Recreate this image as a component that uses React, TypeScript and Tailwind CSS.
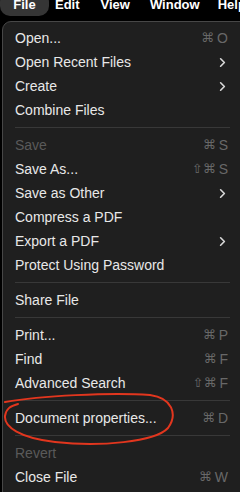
import { ChevronRight } from 'lucide-react';

type Item =
  | { kind: 'sep' }
  | { kind: 'item'; label: string; shortcut?: string; sub?: boolean; disabled?: boolean };

const items: Item[] = [
  { kind: 'item', label: 'Open...', shortcut: '⌘O' },
  { kind: 'item', label: 'Open Recent Files', sub: true },
  { kind: 'item', label: 'Create', sub: true },
  { kind: 'item', label: 'Combine Files' },
  { kind: 'sep' },
  { kind: 'item', label: 'Save', shortcut: '⌘S', disabled: true },
  { kind: 'item', label: 'Save As...', shortcut: '⇧⌘S' },
  { kind: 'item', label: 'Save as Other', sub: true },
  { kind: 'item', label: 'Compress a PDF' },
  { kind: 'item', label: 'Export a PDF', sub: true },
  { kind: 'item', label: 'Protect Using Password' },
  { kind: 'sep' },
  { kind: 'item', label: 'Share File' },
  { kind: 'sep' },
  { kind: 'item', label: 'Print...', shortcut: '⌘P' },
  { kind: 'item', label: 'Find', shortcut: '⌘F' },
  { kind: 'item', label: 'Advanced Search', shortcut: '⇧⌘F' },
  { kind: 'sep' },
  { kind: 'item', label: 'Document properties...', shortcut: '⌘D' },
  { kind: 'sep' },
  { kind: 'item', label: 'Revert', disabled: true },
  { kind: 'item', label: 'Close File', shortcut: '⌘W' },
];

function Shortcut({ keys }: { keys: string }) {
  const chars = keys.split('');
  const letter = chars.pop();
  return (
    <span className="flex items-center gap-[3px] text-[14px] text-[#686868]">
      <span className="font-['DejaVu_Sans',sans-serif] text-[13px]">{chars.join('')}</span>
      <span>{letter}</span>
    </span>
  );
}

export default function App() {
  return (
    <div className="relative h-[492px] w-[240px] overflow-hidden bg-black font-['Liberation_Sans',Arial,sans-serif]">
      {/* Menu bar */}
      <div className="flex h-[18px] items-start whitespace-nowrap text-[13px] font-bold leading-[10px] text-white">
        <div className="-mt-[8px] h-[24px] w-[49px] shrink-0 rounded-[10px] bg-[#353535] pt-[8px] text-center">File</div>
        <div className="ml-[6px] shrink-0">Edit</div>
        <div className="ml-[21px] shrink-0">View</div>
        <div className="ml-[20px] shrink-0">Window</div>
        <div className="ml-[18px] shrink-0">Help</div>
      </div>

      {/* Dropdown panel */}
      <div className="ml-[2px] mt-[3px] w-[260px] rounded-tl-[9px] border border-[#474747] bg-[#1f1f1f] pb-[20px] pl-[12px] pt-[4px]">
        {items.map((it, i) =>
          it.kind === 'sep' ? (
            <div key={i} className="flex h-[11px] w-[215px] items-center">
              <div className="h-px w-full bg-[#383838]" />
            </div>
          ) : (
            <div key={i} className="flex h-[24px] w-[213px] items-center justify-between">
              <span className={it.disabled ? 'text-[14px] text-[#5a5a5a]' : 'text-[14px] text-[#e8e8e8]'}>
                {it.label}
              </span>
              {it.shortcut && <Shortcut keys={it.shortcut} />}
              {it.sub && <ChevronRight className="-mr-[2px] h-[15px] w-[15px] text-[#d8d8d8]" strokeWidth={2.6} />}
            </div>
          )
        )}
      </div>

      {/* Red hand-drawn ellipse */}
      <svg className="pointer-events-none absolute left-0 top-[392px]" width="180" height="60" viewBox="0 0 180 60">
        <path
          d="M5 10 C 40 4, 110 0, 150 3 C 172 6, 178 22, 168 36 C 155 50, 100 55, 55 50 C 20 46, 4 35, 5 24 C 6 17, 10 14, 18 12"
          fill="none"
          stroke="#e2361e"
          strokeWidth="2"
          strokeLinecap="round"
        />
      </svg>
    </div>
  );
}
